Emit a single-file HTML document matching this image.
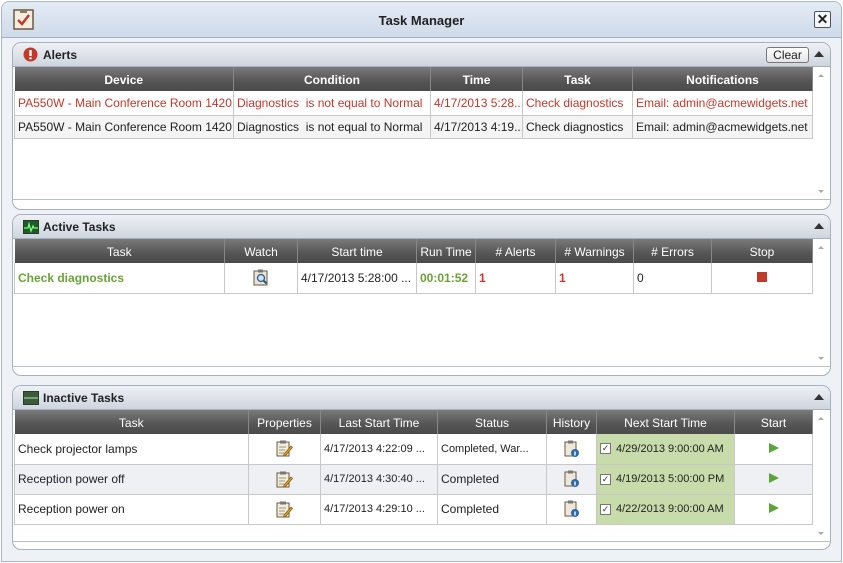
<!DOCTYPE html>
<html><head><style>
*{box-sizing:border-box;margin:0;padding:0}
body{width:843px;height:563px;overflow:hidden;background:#fff;font-family:"Liberation Sans",Arial,sans-serif;font-size:12px;color:#222;position:relative}
.win{position:absolute;left:1px;top:1px;width:841px;height:561px;border:1px solid #a9b7c9;border-radius:8px 8px 0 0;background:#eef2f7}
.title{position:absolute;left:0;top:0;width:839px;height:36px;background:linear-gradient(#e4ebf4,#cfdbea);border-bottom:1px solid #9fb0c8;border-radius:7px 7px 0 0}
.title .t{position:absolute;left:0;right:0;top:11px;text-align:center;font-weight:bold;font-size:13px;color:#222}
.panel{position:absolute;left:12px;width:819px;border:1px solid #a7b0bd;border-radius:9px;background:#fff;overflow:hidden}
.ph{position:absolute;left:0;top:0;width:100%;height:24px;background:linear-gradient(#eef1f6,#cfd5de);border-bottom:1px solid #a7b0bd}
.ph .n{position:absolute;left:30px;top:5px;font-weight:bold;font-size:12px;color:#222}
.ph .up{position:absolute;right:6px;top:8px;width:0;height:0;border-left:5px solid transparent;border-right:5px solid transparent;border-bottom:6px solid #333}
table{position:absolute;left:1px;border-collapse:collapse;table-layout:fixed}
th{height:24px;background:linear-gradient(#7a7a7a,#555 60%,#4a4a4a);color:#fff;font-weight:normal;font-size:12px;border-right:1px solid #888;text-align:center;padding-top:1px}
th.b{font-weight:bold}
td{border:1px solid #c8c8c8;border-top:0;padding:0 3px;white-space:nowrap;overflow:hidden;font-size:12px}
.red td{color:#c0392b}
.sb{position:absolute;right:1px;width:16px;background:#fff}
.sb:before{content:"";position:absolute;left:5px;top:6px;border-left:3px solid transparent;border-right:3px solid transparent;border-bottom:3px solid #aaa}
.sb:after{content:"";position:absolute;left:5px;bottom:6px;border-left:3px solid transparent;border-right:3px solid transparent;border-top:3px solid #aaa}
.ic{display:inline-block;vertical-align:middle}
.g{background:#c7dcaa}
.play{display:inline-block;width:0;height:0;border-top:5px solid transparent;border-bottom:5px solid transparent;border-left:10px solid #5aa43a}
.cb{display:inline-block;width:11px;height:11px;border:1px solid #777;background:#fff;vertical-align:middle;margin-right:5px;position:relative;font-size:9px;line-height:9px;text-align:center;color:#335}
</style></head><body>
<div class="win">
<div class="title">
<svg style="position:absolute;left:11px;top:7px" width="21" height="21" viewBox="0 0 21 21"><rect x="1" y="1" width="19" height="19" fill="#f4ede0" stroke="#6b5a40" stroke-width="1.5"/><rect x="7" y="0" width="7" height="4" fill="#8a7a60"/><path d="M5 11l4 4 7-9" stroke="#c0392b" stroke-width="2.5" fill="none"/></svg>
<div class="t">Task Manager</div>
<div style="position:absolute;left:812px;top:9px;width:17px;height:17px;border:1px solid #555;border-radius:2px;background:#f4f6f9;text-align:center;font-size:14px;line-height:14px;font-weight:bold">✕</div>
</div>
</div>

<!-- Alerts -->
<div class="panel" style="top:42px;height:168px">
<div class="ph"><svg style="position:absolute;left:10px;top:4px" width="15" height="15"><circle cx="7.5" cy="7.5" r="7" fill="#c0392b"/><rect x="6.3" y="3" width="2.4" height="6" fill="#fff"/><rect x="6.3" y="10.3" width="2.4" height="2" fill="#fff"/></svg><span class="n">Alerts</span>
<div style="position:absolute;left:753px;top:4px;width:43px;height:16px;border:1px solid #777;border-radius:3px;background:linear-gradient(#fff,#e4e4e4);text-align:center;font-size:12px;line-height:14px">Clear</div><div class="up"></div></div>
<table style="top:24px;width:798px">
<colgroup><col style="width:219px"><col style="width:197px"><col style="width:92px"><col style="width:110px"><col style="width:180px"></colgroup>
<tr><th class="b">Device</th><th class="b">Condition</th><th class="b">Time</th><th class="b">Task</th><th class="b">Notifications</th></tr>
<tr class="red" style="height:24px"><td>PA550W - Main Conference Room 1420</td><td>Diagnostics&nbsp; is not equal to Normal</td><td>4/17/2013 5:28...</td><td>Check diagnostics</td><td>Email: admin@acmewidgets.net</td></tr>
<tr style="height:23px;background:#f4f4f4"><td>PA550W - Main Conference Room 1420</td><td>Diagnostics&nbsp; is not equal to Normal</td><td>4/17/2013 4:19...</td><td>Check diagnostics</td><td>Email: admin@acmewidgets.net</td></tr>
</table>
<div class="sb" style="top:25px;height:131px"></div>
<div style="position:absolute;left:0;top:156px;width:100%;border-top:1px solid #b8c0cc"></div>
</div>

<!-- Active -->
<div class="panel" style="top:214px;height:162px">
<div class="ph"><svg style="position:absolute;left:10px;top:5px" width="16" height="14"><rect width="16" height="14" fill="#2a3a2a"/><rect x="1" y="1" width="14" height="12" fill="#1f5a2a"/><path d="M1 8h4l1-4 2 7 2-5 1 2h4" stroke="#7f7" stroke-width="1.3" fill="none"/></svg><span class="n">Active Tasks</span><div class="up"></div></div>
<table style="top:24px;width:798px">
<colgroup><col style="width:210px"><col style="width:73px"><col style="width:119px"><col style="width:59px"><col style="width:80px"><col style="width:78px"><col style="width:78px"><col style="width:101px"></colgroup>
<tr><th>Task</th><th>Watch</th><th>Start time</th><th>Run Time</th><th># Alerts</th><th># Warnings</th><th># Errors</th><th>Stop</th></tr>
<tr style="height:30px"><td style="color:#6aa23a;font-weight:bold">Check diagnostics</td><td style="text-align:center"><svg class="ic" width="16" height="17"><rect x="1" y="2" width="13" height="14" fill="#e8e4da" stroke="#6b5a40"/><rect x="5" y="0.5" width="5" height="3" fill="#777"/><circle cx="8" cy="9" r="3.5" fill="#cfe3f5" stroke="#2c5a8a" stroke-width="1.3"/><path d="M10.5 11.5l3 3" stroke="#2c5a8a" stroke-width="2"/></svg></td><td>4/17/2013 5:28:00 ...</td><td style="color:#6aa23a;font-weight:bold">00:01:52</td><td style="color:#c0392b;font-weight:bold">1</td><td style="color:#c0392b;font-weight:bold">1</td><td>0</td><td style="text-align:center"><span style="display:inline-block;width:10px;height:10px;background:#c0392b"></span></td></tr>
</table>
<div class="sb" style="top:25px;height:126px"></div>
<div style="position:absolute;left:0;top:151px;width:100%;border-top:1px solid #b8c0cc"></div>
</div>

<!-- Inactive -->
<div class="panel" style="top:385px;height:165px">
<div class="ph"><svg style="position:absolute;left:10px;top:5px" width="16" height="14"><rect width="16" height="14" fill="#2a3a2a"/><rect x="1" y="1" width="14" height="12" fill="#3a5a3a"/><path d="M1 7h14" stroke="#9c9" stroke-width="1.3"/></svg><span class="n">Inactive Tasks</span><div class="up"></div></div>
<table style="top:24px;width:798px">
<colgroup><col style="width:234px"><col style="width:72px"><col style="width:117px"><col style="width:109px"><col style="width:50px"><col style="width:138px"><col style="width:78px"></colgroup>
<tr><th>Task</th><th>Properties</th><th>Last Start Time</th><th>Status</th><th>History</th><th>Next Start Time</th><th>Start</th></tr>
<tr style="height:30px"><td>Check projector lamps</td><td style="text-align:center"><svg class="ic" width="17" height="17"><rect x="1" y="2" width="12" height="14" fill="#f2ecdc" stroke="#6b5a40"/><rect x="4" y="0.5" width="6" height="3" fill="#777"/><path d="M3 7h7M3 10h6M3 13h5" stroke="#998" stroke-width="1"/><path d="M8 14l7-8 1.5 1.5-7 8-2 .5z" fill="#e0a020" stroke="#7a5a10" stroke-width=".7"/></svg></td><td style="font-size:11px">4/17/2013 4:22:09 ...</td><td style="font-size:11px">Completed, War...</td><td style="text-align:center"><svg class="ic" width="16" height="18"><rect x="1" y="2" width="11" height="14" fill="#eee8da" stroke="#6b5a40"/><rect x="4" y="0.5" width="5" height="3" fill="#777"/><circle cx="11" cy="13" r="4" fill="#2c6ab0"/><rect x="10.3" y="11.5" width="1.4" height="4" fill="#fff"/></svg></td><td class="g" style="font-size:11px"><span class="cb">✓</span>4/29/2013 9:00:00 AM</td><td style="text-align:center"><span class="play"></span></td></tr>
<tr style="height:30px;background:#eef0f4"><td>Reception power off</td><td style="text-align:center"><svg class="ic" width="17" height="17"><rect x="1" y="2" width="12" height="14" fill="#f2ecdc" stroke="#6b5a40"/><rect x="4" y="0.5" width="6" height="3" fill="#777"/><path d="M3 7h7M3 10h6M3 13h5" stroke="#998" stroke-width="1"/><path d="M8 14l7-8 1.5 1.5-7 8-2 .5z" fill="#e0a020" stroke="#7a5a10" stroke-width=".7"/></svg></td><td style="font-size:11px">4/17/2013 4:30:40 ...</td><td>Completed</td><td style="text-align:center"><svg class="ic" width="16" height="18"><rect x="1" y="2" width="11" height="14" fill="#eee8da" stroke="#6b5a40"/><rect x="4" y="0.5" width="5" height="3" fill="#777"/><circle cx="11" cy="13" r="4" fill="#2c6ab0"/><rect x="10.3" y="11.5" width="1.4" height="4" fill="#fff"/></svg></td><td class="g" style="font-size:11px"><span class="cb">✓</span>4/19/2013 5:00:00 PM</td><td style="text-align:center"><span class="play"></span></td></tr>
<tr style="height:30px"><td>Reception power on</td><td style="text-align:center"><svg class="ic" width="17" height="17"><rect x="1" y="2" width="12" height="14" fill="#f2ecdc" stroke="#6b5a40"/><rect x="4" y="0.5" width="6" height="3" fill="#777"/><path d="M3 7h7M3 10h6M3 13h5" stroke="#998" stroke-width="1"/><path d="M8 14l7-8 1.5 1.5-7 8-2 .5z" fill="#e0a020" stroke="#7a5a10" stroke-width=".7"/></svg></td><td style="font-size:11px">4/17/2013 4:29:10 ...</td><td>Completed</td><td style="text-align:center"><svg class="ic" width="16" height="18"><rect x="1" y="2" width="11" height="14" fill="#eee8da" stroke="#6b5a40"/><rect x="4" y="0.5" width="5" height="3" fill="#777"/><circle cx="11" cy="13" r="4" fill="#2c6ab0"/><rect x="10.3" y="11.5" width="1.4" height="4" fill="#fff"/></svg></td><td class="g" style="font-size:11px"><span class="cb">✓</span>4/22/2013 9:00:00 AM</td><td style="text-align:center"><span class="play"></span></td></tr>
</table>
<div class="sb" style="top:25px;height:130px"></div>
<div style="position:absolute;left:0;top:155px;width:100%;border-top:1px solid #b8c0cc"></div>
</div>
</body></html>
